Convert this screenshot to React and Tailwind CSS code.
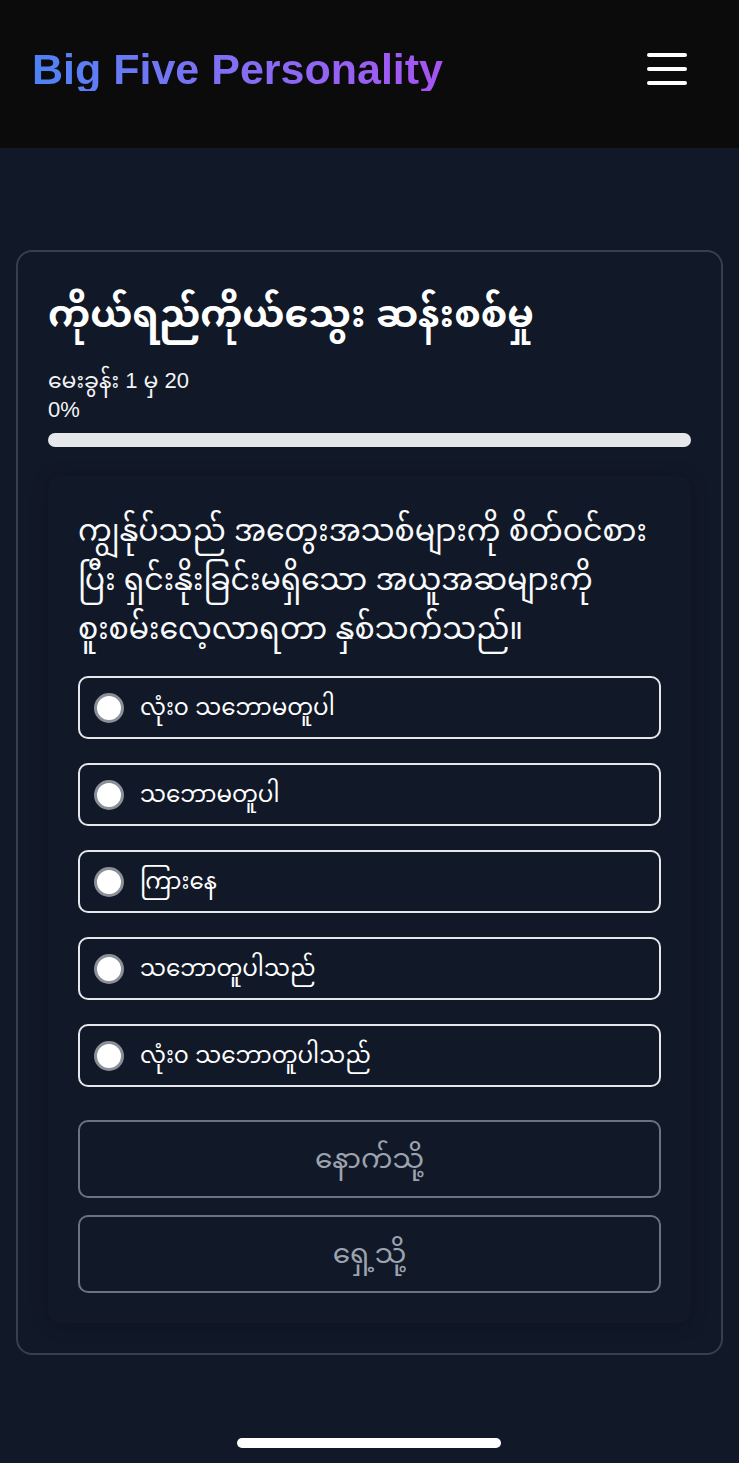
import React, { useState } from 'react';

const options = [
  'လုံး၀ သဘောမတူပါ',
  'သဘောမတူပါ',
  'ကြားနေ',
  'သဘောတူပါသည်',
  'လုံး၀ သဘောတူပါသည်',
];

const font = { fontFamily: '"Liberation Sans", "Noto Sans", "Noto Sans Myanmar", sans-serif' };

const App = () => {
  const [picked, setPicked] = useState(null);

  return (
    <div style={font} className="relative min-h-[1463px] bg-[#111827] text-white">
      <header className="h-[148px] bg-[#0b0b0c] flex items-center justify-between pl-8 pr-[52px] pb-[10px]">
        <h1 className="text-[43px] font-bold leading-none bg-gradient-to-r from-[#4c82f5] to-[#a653f2] bg-clip-text text-transparent">
          Big Five Personality
        </h1>
        <button className="flex flex-col gap-[10px]">
          <span className="block w-[40px] h-[4px] rounded-full bg-white" />
          <span className="block w-[40px] h-[4px] rounded-full bg-white" />
          <span className="block w-[40px] h-[4px] rounded-full bg-white" />
        </button>
      </header>

      <main className="px-4 pt-[102px]">
        <div className="border-2 border-[#373e4c] rounded-2xl bg-[#111827] px-[30px] pt-8 pb-[30px]">
          <h2 className="text-[38px] font-bold leading-[60px]">ကိုယ်ရည်ကိုယ်သွေး ဆန်းစစ်မှု</h2>
          <div className="mt-[22px] text-[22px] leading-[29px] text-gray-100">
            <p>မေးခွန်း 1 မှ 20</p>
            <p>0%</p>
          </div>
          <div className="mt-[9px] h-[14px] rounded-full bg-[#e5e7eb]" />

          <div className="mt-[29px] rounded-xl bg-[#111827] shadow-[0_2px_18px_rgba(0,0,0,0.22)] p-[30px]">
            <p className="text-[30px] leading-[49px] text-gray-50">
              ကျွန်ုပ်သည် အတွေးအသစ်များကို စိတ်ဝင်စားပြီး ရှင်းနိုး​ခြင်းမရှိသော အယူအဆများကို စူးစမ်းလေ့လာရတာ နှစ်သက်သည်။
            </p>
            <div className="mt-[23px] flex flex-col gap-6">
              {options.map((o, i) => (
                <label
                  key={i}
                  onClick={() => setPicked(i)}
                  className="h-[63px] flex items-center gap-4 px-[14px] border-2 border-[#e5e7eb] rounded-[10px] cursor-pointer"
                >
                  <span className="w-[30px] h-[30px] rounded-full bg-white border-[3px] border-[#8b8f97] flex items-center justify-center">
                    {picked === i && <span className="w-3 h-3 rounded-full bg-blue-600" />}
                  </span>
                  <span className="text-[23px]">{o}</span>
                </label>
              ))}
            </div>
            <div className="mt-[33px] flex flex-col gap-[17px]">
              <button className="h-[78px] border-2 border-[#6b7280] rounded-[10px] text-[28px] text-[#9ca3af]">နောက်သို့</button>
              <button className="h-[78px] border-2 border-[#6b7280] rounded-[10px] text-[28px] text-[#9ca3af]">ရှေ့သို့</button>
            </div>
          </div>
        </div>
      </main>

      <div className="absolute left-[237px] top-[1438px] w-[264px] h-[10px] rounded-full bg-white" />
    </div>
  );
};

export default App;
